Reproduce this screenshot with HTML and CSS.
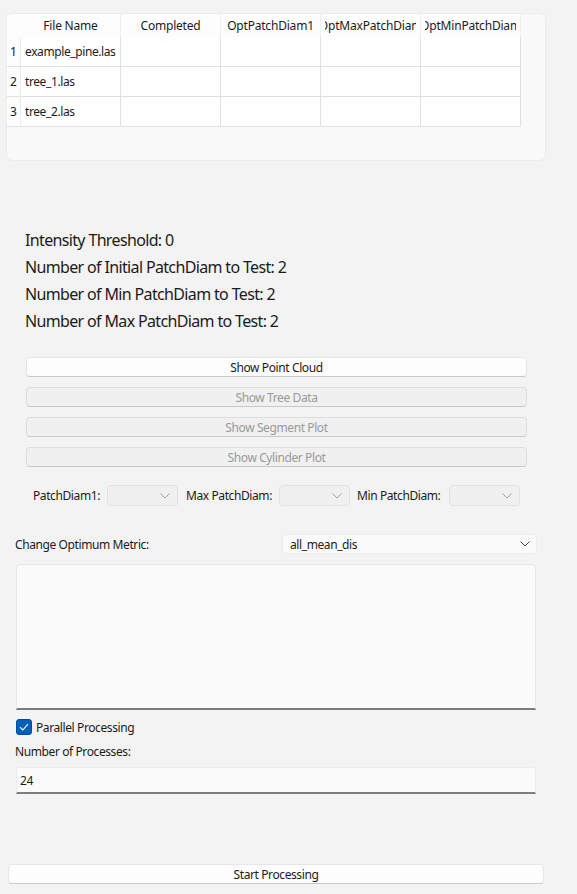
FILE: index.html
```html
<!DOCTYPE html>
<html>
<head>
<meta charset="utf-8">
<link rel="stylesheet" href="styles.css">
</head>
<body>
<div class="app">
  <div class="table-panel">
    <div class="grid">
      <div class="corner"></div>
      <div class="hcell"><div class="hclip"><span>File Name</span></div></div>
      <div class="hcell"><div class="hclip"><span>Completed</span></div></div>
      <div class="hcell"><div class="hclip"><span>OptPatchDiam1</span></div></div>
      <div class="hcell"><div class="hclip"><span>OptMaxPatchDiam</span></div></div>
      <div class="hcell"><div class="hclip"><span>OptMinPatchDiam</span></div></div>

      <div class="rhead">1</div>
      <div class="cell">example_pine.las</div>
      <div class="cell"></div><div class="cell"></div><div class="cell"></div><div class="cell"></div>

      <div class="rhead">2</div>
      <div class="cell">tree_1.las</div>
      <div class="cell"></div><div class="cell"></div><div class="cell"></div><div class="cell"></div>

      <div class="rhead">3</div>
      <div class="cell">tree_2.las</div>
      <div class="cell"></div><div class="cell"></div><div class="cell"></div><div class="cell"></div>
    </div>
  </div>

  <div class="info">
    <div>Intensity Threshold: 0</div>
    <div>Number of Initial PatchDiam to Test: 2</div>
    <div>Number of Min PatchDiam to Test: 2</div>
    <div>Number of Max PatchDiam to Test: 2</div>
  </div>

  <div class="btn-stack">
    <div class="btn">Show Point Cloud</div>
    <div class="btn disabled">Show Tree Data</div>
    <div class="btn disabled">Show Segment Plot</div>
    <div class="btn disabled">Show Cylinder Plot</div>
  </div>

  <div class="combo-row">
    <span class="clabel l1">PatchDiam1:</span>
    <div class="combo off"><svg width="10" height="6" viewBox="0 0 10 6"><path d="M0.5 0.5 L5 5 L9.5 0.5" fill="none" stroke="#a2a2a2" stroke-width="1"/></svg></div>
    <span class="clabel l2">Max PatchDiam:</span>
    <div class="combo off"><svg width="10" height="6" viewBox="0 0 10 6"><path d="M0.5 0.5 L5 5 L9.5 0.5" fill="none" stroke="#a2a2a2" stroke-width="1"/></svg></div>
    <span class="clabel l3">Min PatchDiam:</span>
    <div class="combo off"><svg width="10" height="6" viewBox="0 0 10 6"><path d="M0.5 0.5 L5 5 L9.5 0.5" fill="none" stroke="#a2a2a2" stroke-width="1"/></svg></div>
  </div>

  <div class="metric-row">
    <span class="mlabel">Change Optimum Metric:</span>
    <div class="combo on"><span>all_mean_dis</span><svg width="10" height="6" viewBox="0 0 10 6"><path d="M0.5 0.5 L5 5 L9.5 0.5" fill="none" stroke="#444" stroke-width="1"/></svg></div>
  </div>

  <div class="textarea"></div>

  <div class="check-row">
    <span class="checkbox"><svg width="10" height="8" viewBox="0 0 10 8"><path d="M1 4.2 L3.8 7 L9 1.2" fill="none" stroke="#fff" stroke-width="1.1"/></svg></span>
    <span>Parallel Processing</span>
  </div>

  <div class="nlabel">Number of Processes:</div>
  <div class="input">24</div>

  <div class="btn start">Start Processing</div>
</div>
</body>
</html>
```
FILE: styles.css
```css
html, body {
  margin: 0;
  padding: 0;
}
body {
  background: #f3f3f3;
  font-family: "Noto Sans", "Open Sans", sans-serif;
  font-size: 12px;
  letter-spacing: -0.4px;
  color: #1b1b1b;
  width: 577px;
  height: 894px;
  overflow: hidden;
}
.app {
  padding-top: 14px;
}
.table-panel {
  margin-left: 7px;
  width: 538px;
  height: 146px;
  background: #f9f9f9;
  border-radius: 5px;
  box-shadow: 0 0 0 1px #ececec;
  overflow: hidden;
}
.grid {
  display: grid;
  grid-template-columns: 14px repeat(5, 100px);
  grid-template-rows: 23px repeat(3, 30px);
  width: 514px;
}
.corner {
  background: #fdfdfd;
}
.hcell {
  background: #fdfdfd;
  border-right: 1px solid #efefef;
  display: flex;
  align-items: center;
  padding: 0 4px;
  min-width: 0;
}
.hclip {
  flex: 1;
  min-width: 0;
  display: flex;
  justify-content: center;
  overflow: hidden;
  white-space: nowrap;
  letter-spacing: -0.2px;
}
.hclip span {
  flex: none;
}
.rhead {
  background: #fdfdfd;
  border-bottom: 1px solid #e2e2e2;
  border-right: 1px solid #ececec;
  display: flex;
  align-items: center;
  padding-left: 3px;
  box-sizing: border-box;
}
.cell {
  background: #ffffff;
  border-right: 1px solid #e0e0e0;
  border-bottom: 1px solid #e0e0e0;
  display: flex;
  align-items: center;
  padding-left: 4px;
  white-space: nowrap;
  overflow: hidden;
}
.info {
  margin-top: 67px;
  padding-left: 25px;
  font-size: 16px;
  letter-spacing: -0.65px;
  line-height: 27px;
  color: #1b1b1b;
}
.btn-stack {
  margin: 22px 0 0 26px;
  width: 501px;
  display: flex;
  flex-direction: column;
  gap: 10px;
}
.btn {
  height: 20px;
  box-sizing: border-box;
  background: #fdfdfd;
  border: 1px solid #e6e6e6;
  border-bottom-color: #c8c8c8;
  border-radius: 4px;
  display: flex;
  align-items: center;
  justify-content: center;
  font-size: 12px;
  color: #1b1b1b;
}
.btn.disabled {
  background: #f0f0f0;
  border-color: #dedede;
  border-bottom-color: #c9c9c9;
  color: #9a9a9a;
}
.combo-row {
  margin-top: 18px;
  height: 21px;
  display: flex;
  align-items: center;
  padding-left: 33px;
}
.clabel {
  white-space: nowrap;
}
.l1 { width: 74px; }
.l2 { width: 93px; margin-left: 8px; }
.l3 { width: 92px; margin-left: 7px; }
.combo {
  box-sizing: border-box;
  border-radius: 4px;
  display: flex;
  align-items: center;
  justify-content: flex-end;
}
.combo.off {
  width: 71px;
  height: 21px;
  background: #f0f0f0;
  border: 1px solid #e2e2e2;
  padding-right: 7px;
}
.metric-row {
  margin-top: 28px;
  display: flex;
  align-items: center;
  height: 20px;
}
.mlabel {
  margin-left: 15px;
  width: 267px;
}
.combo.on {
  width: 255px;
  height: 20px;
  background: #fbfbfb;
  border: 1px solid #ececec;
  justify-content: space-between;
  padding: 0 6px 0 7px;
}
.textarea {
  margin: 10px 0 0 16px;
  width: 520px;
  height: 146px;
  box-sizing: border-box;
  background: #fafafa;
  border: 1px solid #e8e8e8;
  border-bottom: 2px solid #7d7d7d;
  border-radius: 4px 4px 0 0;
}
.check-row {
  margin: 9px 0 0 16px;
  height: 16px;
  display: flex;
  align-items: center;
  gap: 4px;
}
.checkbox {
  width: 16px;
  height: 16px;
  box-sizing: border-box;
  background: #005fb8;
  border: 1px solid #004e99;
  border-radius: 3px;
  display: flex;
  align-items: center;
  justify-content: center;
}
.nlabel {
  margin: 9px 0 0 15px;
  line-height: 16px;
}
.input {
  margin: 7px 0 0 16px;
  width: 520px;
  height: 27px;
  box-sizing: border-box;
  background: #fbfbfb;
  border: 1px solid #ececec;
  border-bottom: 2px solid #7d7d7d;
  border-radius: 4px 4px 0 0;
  display: flex;
  align-items: center;
  padding-left: 3px;
}
.btn.start {
  margin: 70px 0 0 8px;
  width: 536px;
}
```
